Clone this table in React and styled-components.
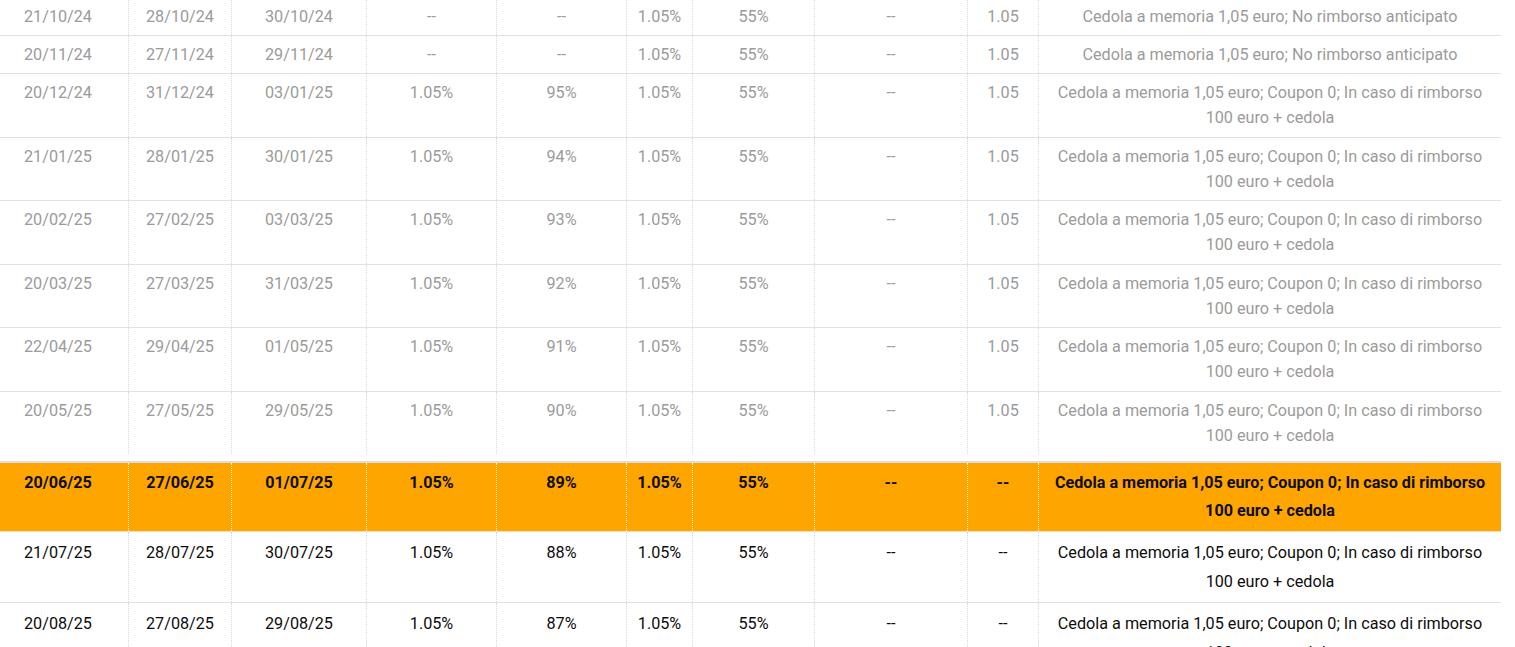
import React from "react";
import styled, { createGlobalStyle } from "styled-components";

const GlobalStyle = createGlobalStyle`
  html, body {
    margin: 0;
    padding: 0;
    background: #fff;
    overflow: hidden;
  }
  body {
    font-family: Roboto, "Liberation Sans", sans-serif;
  }
`;

const COLS = "141px 103px 135px 130px 130px 66px 122px 153px 71px 462px";

// the table is scrolled a little: 12px left, a few px up
const Viewport = styled.div`
  width: 1515px;
  height: 647px;
  overflow: hidden;
`;

const Table = styled.div`
  display: flex;
  flex-direction: column;
  width: 1513px;
  margin: -2.5px 0 0 -12px;
`;

const Row = styled.div`
  display: grid;
  grid-template-columns: ${COLS};
  border-bottom: ${({ $last }) => ($last ? "none" : "1px solid #e0e1e7")};
  color: ${({ $state }) => ($state === "past" ? "#9b9b9b" : "#0d0d0d")};
  background: ${({ $state }) => ($state === "current" ? "#ffa500" : "#fff")};
  font-weight: ${({ $state }) => ($state === "current" ? 700 : 400)};
  line-height: ${({ $state }) =>
    $state === "past" ? "25.25px" : $state === "current" ? "28px" : "29px"};
  ${({ $state }) =>
    $state === "current" &&
    `
    margin-top: 7px;
    border-top: 2px solid #dcdde3;
    border-bottom: 1px solid #f3e2c0;
  `}
`;

const Cell = styled.div`
  padding: 6px 10px;
  font-size: 16.2px;
  text-align: center;
  border-right: 1px dotted
    ${({ $state }) => ($state === "current" ? "#fff3dc" : "#d6d9e0")};
  &:last-child {
    border-right: none;
    padding: 6px 12px;
  }
`;

const NOTE_A = "Cedola a memoria 1,05 euro; No rimborso anticipato";
const NOTE_B = "Cedola a memoria 1,05 euro; Coupon 0; In caso di rimborso 100 euro + cedola";

const rows = [
  ["21/10/24", "28/10/24", "30/10/24", "--", "--", "1.05%", "55%", "--", "1.05", NOTE_A, "past"],
  ["20/11/24", "27/11/24", "29/11/24", "--", "--", "1.05%", "55%", "--", "1.05", NOTE_A, "past"],
  ["20/12/24", "31/12/24", "03/01/25", "1.05%", "95%", "1.05%", "55%", "--", "1.05", NOTE_B, "past"],
  ["21/01/25", "28/01/25", "30/01/25", "1.05%", "94%", "1.05%", "55%", "--", "1.05", NOTE_B, "past"],
  ["20/02/25", "27/02/25", "03/03/25", "1.05%", "93%", "1.05%", "55%", "--", "1.05", NOTE_B, "past"],
  ["20/03/25", "27/03/25", "31/03/25", "1.05%", "92%", "1.05%", "55%", "--", "1.05", NOTE_B, "past"],
  ["22/04/25", "29/04/25", "01/05/25", "1.05%", "91%", "1.05%", "55%", "--", "1.05", NOTE_B, "past"],
  ["20/05/25", "27/05/25", "29/05/25", "1.05%", "90%", "1.05%", "55%", "--", "1.05", NOTE_B, "last"],
  ["20/06/25", "27/06/25", "01/07/25", "1.05%", "89%", "1.05%", "55%", "--", "--", NOTE_B, "current"],
  ["21/07/25", "28/07/25", "30/07/25", "1.05%", "88%", "1.05%", "55%", "--", "--", NOTE_B, "future"],
  ["20/08/25", "27/08/25", "29/08/25", "1.05%", "87%", "1.05%", "55%", "--", "--", NOTE_B, "future"],
];

export default function App() {
  return (
    <Viewport>
      <GlobalStyle />
      <Table>
        {rows.map((r) => {
          const kind = r[10];
          const state = kind === "last" ? "past" : kind;
          return (
            <Row key={r[0]} $state={state} $last={kind === "last"}>
              {r.slice(0, 10).map((v, i) => (
                <Cell key={i} $state={state}>
                  {v}
                </Cell>
              ))}
            </Row>
          );
        })}
      </Table>
    </Viewport>
  );
}
